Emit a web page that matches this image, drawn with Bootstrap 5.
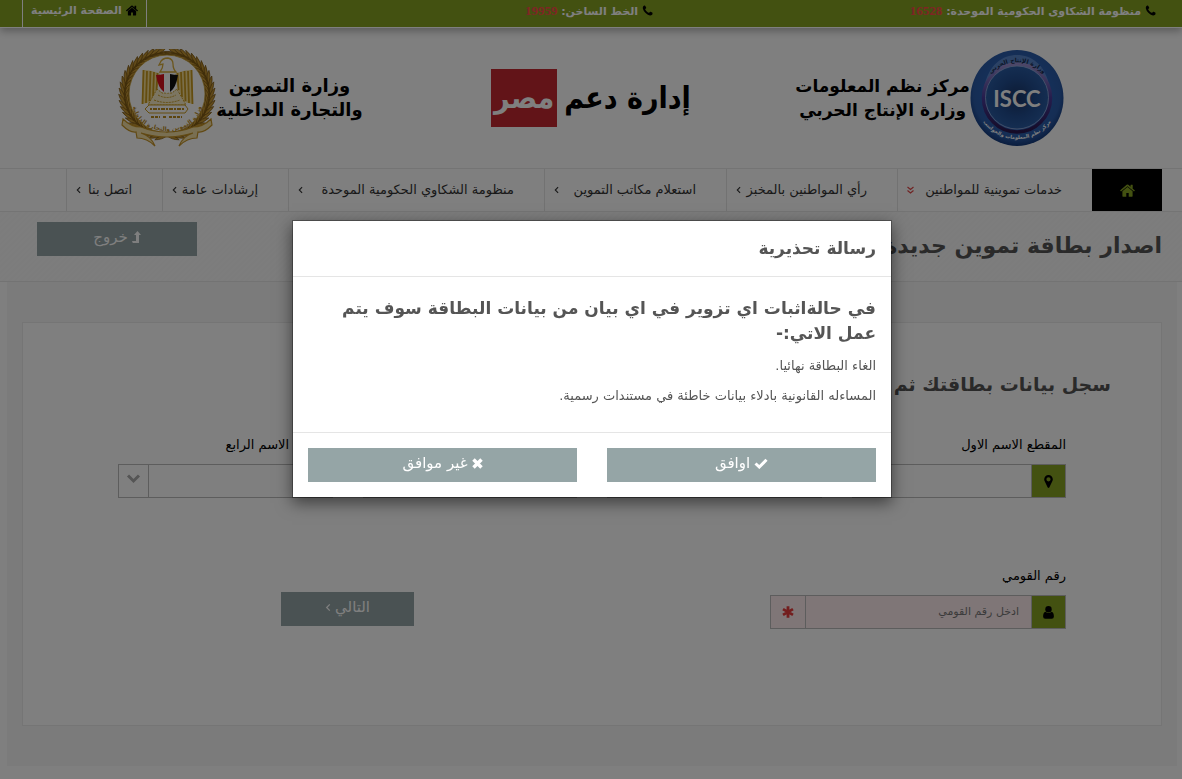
<!DOCTYPE html>
<html lang="ar" dir="rtl">
<head>
<meta charset="utf-8">
<meta name="viewport" content="width=device-width, initial-scale=1">
<title>اصدار بطاقة تموين جديدة</title>
<link href="https://cdn.jsdelivr.net/npm/bootstrap@5.3.0/dist/css/bootstrap.min.css" rel="stylesheet">
<style>
:root { --olive: #86a222; --asbestos: #95a5a6; --ink: #555; }
body { font-family: "DejaVu Sans", "Noto Sans", sans-serif; font-size: 13px; color: var(--ink); background: #fff; }
svg { display: block; flex: none; }
a { text-decoration: none; }

/* top strip */
.topstrip { display: grid; grid-template-columns: 1fr auto 1fr; height: 28px; padding: 0 26px 0 22px; background: var(--olive); border-bottom: 1px solid #fff; box-shadow: 0 3px 8px rgba(0,0,0,.3); color: #fff; font-size: 11px; font-weight: 700; line-height: 22px; position: relative; }
.topstrip .hot { display: flex; gap: 4px; }
.topstrip svg { margin-top: 5px; color: #000; }
.topstrip b { color: #ff4a4a; font-family: "Liberation Serif", serif; font-size: 13px; }
.home-link { justify-self: end; display: flex; gap: 4px; padding: 0 8px; color: #fff; border: solid #fff; border-width: 0 1px; }

/* logos */
.brands { display: grid; grid-template-columns: 1fr auto 1fr; align-items: center; height: 140px; padding: 0 10%; color: #000; }
.brands .org { font-size: 17px; font-weight: 700; line-height: 24px; text-align: center; margin: 0; }
.brands .org-supply { font-size: 18px; }
.wordmark { font-family: "DejaVu Sans Condensed", "DejaVu Sans", sans-serif; font-weight: 700; font-size: 30px; line-height: 58px; gap: 7px; }
.wordmark span:last-child { width: 66px; background: #c42830; color: #fff; text-align: center; }

/* main menu */
.mainmenu { display: grid; grid-template-columns: 70fr 195fr 171fr 182fr 256fr 126fr 96fr; padding: 0 20px 0 66px; border: solid #e8e8e8; border-width: 1px 0; }
.mainmenu a { display: flex; align-items: center; justify-content: space-between; height: 42px; padding: 0 30px 0 9px; color: #333; font-size: 13px; white-space: nowrap; border-left: 1px solid #e4e4e4; }
.mainmenu a.start { background: #000; color: var(--olive); justify-content: center; padding: 0; border: 0; }

.titlebar { height: 70px; padding: 10px 20px 0 37px; border-bottom: 1px solid #e6e6e6; background: repeating-linear-gradient(135deg, #fbfbfb 0 2px, #f8f8f8 2px 4px); }
.titlebar h1 { font-size: 22px; font-weight: 700; line-height: 48px; margin: 0; color: var(--ink); }
.btn-flat { --bs-btn-bg: var(--asbestos); --bs-btn-color: #fff; --bs-btn-hover-bg: #7f8c8d; --bs-btn-hover-color: #fff; --bs-btn-border-radius: 0; border: 0; height: 34px; padding: 0 0 4px; font-size: 15px; line-height: 30px; display: flex; align-items: center; justify-content: center; gap: 4px; width: 100%; }
.btn-exit { width: 160px; }

.stage { background: #f7f7f7; margin: 0 5px 14px 7px; padding: 40px 15px; }
.panel { background: #fff; border: 1px solid #ebebeb; padding: 46px 50px 96px; }
.panel h2 { font-size: 19px; font-weight: 700; line-height: 30px; margin: 0 0 34px; color: var(--ink); }
.fields { padding: 0 45px; }
.fields .row { --bs-gutter-x: 30px; }
.fields label { color: #000; font-size: 13px; line-height: 24px; margin: 0 0 7px; display: block; white-space: nowrap; }
.fields .input-group { flex-wrap: nowrap; height: 34px; }
.fields .input-group > * { border-radius: 0 !important; border-color: #bbb; }
.fields .input-group > *:not(:first-child) { margin-left: 0 !important; border-right: 0; }
.tag { width: 35px; justify-content: center; padding: 0; background: var(--olive); color: #000; }
.tag-must { background: #ffecee; color: #e63c3c; }
.fields .form-select { padding: 0 8px; font-size: 13px; background: #fff url("data:image/svg+xml,%3Csvg xmlns='http://www.w3.org/2000/svg' width='30' height='34'%3E%3Cpath d='M29.500 0v34' stroke='%23bbb'/%3E%3Cpath d='M9 11.500l5.500 5.500 5.500-5.500' fill='none' stroke='%23aaa' stroke-width='3'/%3E%3C/svg%3E") no-repeat left center; }
.fields .form-control { background: #ffecee; font-family: "DejaVu Sans", sans-serif; font-size: 11px; padding: 0 12px; }
.fields .form-control::placeholder { color: #777; }
.second-row { margin-top: 66px; }
.next-col { margin-inline-start: 33.3333%; padding-bottom: 3px; }

/* warning dialog */
.warn { padding-left: 2px; }
.warn .modal-dialog { max-width: 600px; margin: 220px auto 0; }
.warn .modal-content { border-radius: 0; border: 1px solid rgba(0,0,0,.3); box-shadow: 0 5px 15px rgba(0,0,0,.5); color: var(--ink); }
.warn .modal-header { padding: 12px 15px 13px; border-color: #e5e5e5; }
.warn .modal-title { font-size: 17px; font-weight: 700; line-height: 30px; }
.warn .modal-body { padding: 19px 15px 21px; }
.warn h3 { font-size: 17px; font-weight: 700; line-height: 25px; margin: 0 0 5px; }
.warn p { font-size: 13px; line-height: 30px; margin: 0; }
.warn .modal-footer { padding: 15px; border-color: #e5e5e5; flex-wrap: nowrap; gap: 30px; }
.warn .modal-footer > * { margin: 0; flex: 1 1 0; }
</style>
</head>
<body>
<svg width="0" height="0" class="position-absolute" aria-hidden="true">
  <symbol id="i-home" viewBox="0 0 16 14"><path fill="currentColor" d="M8 3.200 2.500 7.800V13q0 .6.6.6h3.600V9.600h2.600v4h3.600q.6 0 .6-.6V7.800zM15.800 6.800 13.600 5V1q0-.3-.3-.3h-1.700q-.3 0-.3.300v2L8.900.8q-.9-.7-1.800 0L.2 6.800q-.3.300 0 .5l.6.600q.3.300.5 0L8 2.300l6.700 5.600q.2.300.5 0l.6-.6q.3-.2 0-.5z"/></symbol>
  <symbol id="i-phone" viewBox="0 0 12 12"><path fill="currentColor" d="M11.500 9.300q0 .8-.5 1.300-1 1-2.300.9-2.200-.4-4.800-2.900T.9 3.800Q.6 2.200 1.600 1q.7-.7 1.500-.5.300 0 .5.500l.9 1.700q.3.500-.1.900l-.8.700q-.3.300-.1.600.6 1.200 1.700 2.100.9.900 2 1.500.3.200.6-.1l.8-.9q.3-.4.8-.1l1.700.9q.4.300.4 1z"/></symbol>
  <symbol id="i-left" viewBox="0 0 6 10"><path fill="none" stroke="currentColor" stroke-width="1.400" d="M5 1.500 1.500 5 5 8.500"/></symbol>
</svg>

<header>
  <div class="topstrip">
    <div class="hot"><svg width="11" height="11"><use href="#i-phone"/></svg><span>منظومة الشكاوى الحكومية الموحدة: <b>16528</b></span></div>
    <div class="hot"><svg width="11" height="11"><use href="#i-phone"/></svg><span>الخط الساخن: <b>19959</b></span></div>
    <a class="home-link" href="#"><svg width="12" height="11"><use href="#i-home"/></svg><span>الصفحة الرئيسية</span></a>
  </div>

  <div class="brands">
    <div class="d-flex align-items-center">
      <svg width="94" height="98" viewBox="0 0 94 98" role="img" aria-label="ISCC">
        <defs>
          <radialGradient id="rim" cx=".5" cy=".45" r=".55"><stop offset="0" stop-color="#2f6fd0"/><stop offset=".85" stop-color="#2a5ba8"/><stop offset="1" stop-color="#143a7c"/></radialGradient>
          <linearGradient id="ring" x1="0" y1="0" x2="0" y2="1"><stop offset="0" stop-color="#9a8fd0"/><stop offset=".5" stop-color="#4a3a9a"/><stop offset="1" stop-color="#2a1850"/></linearGradient>
          <radialGradient id="core" cx=".5" cy=".5" r=".5"><stop offset="0" stop-color="#1a3668"/><stop offset=".6" stop-color="#224e92"/><stop offset="1" stop-color="#2a5ca4"/></radialGradient>
          <path id="arcTop" d="M16 32A35 35 0 0 1 78 32"/>
          <path id="arcLow" d="M9 66A42 42 0 0 0 85 66"/>
        </defs>
        <ellipse cx="47" cy="49" rx="46.500" ry="48" fill="url(#rim)"/>
        <path d="M14 40C18 15 33 6 47 6s29 9 33 34C70 12 24 12 14 40z" fill="#8fb4ea" opacity=".45"/>
        <ellipse cx="47" cy="49" rx="33.500" ry="34" fill="none" stroke="url(#ring)" stroke-width="3.500"/>
        <circle cx="47" cy="48.500" r="31.500" fill="url(#core)" stroke="#a9b8e0" stroke-width=".7"/>
        <text x="47" y="58" text-anchor="middle" direction="ltr" font-family="Lato,sans-serif" font-weight="700" font-size="22" fill="#fff">ISCC</text>
        <text font-size="6" fill="#1a2c50" font-weight="700" text-anchor="middle"><textPath href="#arcTop" startOffset="50%">وزارة الإنتاج الحربي</textPath></text>
        <text font-size="5" fill="#fff" font-weight="700" text-anchor="middle"><textPath href="#arcLow" startOffset="50%">مركز نظم المعلومات والحواسب</textPath></text>
      </svg>
      <p class="org">مركز نظم المعلومات<br>وزارة الإنتاج الحربي</p>
    </div>
    <div class="wordmark d-flex"><span>إدارة دعم</span><span>مصر</span></div>
    <div class="d-flex align-items-center justify-content-end">
      <p class="org org-supply">وزارة التموين<br>والتجارة الداخلية</p>
      <svg width="98" height="98" viewBox="0 0 98 98" role="img" aria-label="وزارة التموين">
        <defs>
          <path id="arcEmb" d="M15 57A34 25 0 0 0 83 57"/>
          <marker id="leaf" viewBox="-6 -6 12 12" markerWidth="12" markerHeight="12" markerUnits="userSpaceOnUse" orient="auto" overflow="visible"><path d="M-6 0Q-2-5 6-6 3-1-6 0zM-6 0Q0 5 6 4 2-1-6 0zM-4 0Q2-2 8 0 2 2-4 0z" fill="#c39432" stroke="#7c5814" stroke-width=".7"/></marker>
          <path id="branch" d="M49 86 43.500 85.600 38.100 84.600 33 83 28 80.500 23.400 77.500 19.300 74 15.700 70 12.600 65.500 10.200 60.700 8.400 55.600 7.400 50.400 7 45 7.400 39.600 8.400 34.400 10.200 29.300 12.600 24.500 15.700 20 19.300 16 23.400 12.500 28 9.500 33 7 38.100 5.400 43.500 4.400 49 4" fill="none" stroke="#8a6420" stroke-width="4" marker-mid="url(#leaf)"/>
        </defs>
        <use href="#branch"/><use href="#branch" transform="matrix(-1 0 0 1 98 0)"/>
        <ellipse cx="49" cy="45" rx="38" ry="39" fill="#fff" stroke="#c49a30" stroke-width=".8"/>
        <path d="M42 14q2-5 8-5 5 1 5 6 0 5 3 8H42q3-4 3-8l-4 1z" fill="#fff" stroke="#d8ac3a" stroke-width="1.300"/>
        <path d="M25 21q9 0 17 4l-2 12q-3 8-7 16l-9 2z" fill="#f6df95"/>
        <path d="M74 21q-9 0-17 4l2 12q3 8 7 16l9 2z" fill="#f6df95"/>
        <path d="M25.500 21l-1 34M29 22l-1 32M32.500 22l-1 30M36 23l-1 25M39.500 24l-1 17M73.500 21l1 34M70 22l1 32M66.500 22l1 30M63 23l1 25M59.500 24l1 17" stroke="#c99a1e" stroke-width="1.800" fill="none"/>
        <path d="M39 40l-9 16h38l-9-16-5 4H44z" fill="#f8ecc4" stroke="#c99a1e" stroke-width="1" stroke-dasharray="2 1"/>
        <path d="M40 46q9 5 18 0M36 51q13 5 26 0" fill="none" stroke="#c99a1e" stroke-dasharray="2 1"/>
        <path d="M38 26q4 0 8-1v18q-6-4-8-17z" fill="#d8101c"/><path d="M46 25h6v18l-3 1-3-1z" fill="#fff"/><path d="M52 25q4 1 8 1-2 13-8 17z" fill="#111"/>
        <path d="M31 56h36l3 4-3 4H31l-4-4z" fill="#fff" stroke="#c99a1e" stroke-width="1"/>
        <path d="M32 60h34" stroke="#b98a1e" stroke-width="2" stroke-dasharray="2 1 4 1"/>
        <path d="M33 68h9m3 0h3m3 0h13" stroke="#b98a1e" stroke-width="2" stroke-dasharray="3 1"/>
        <path d="M5 70l-1 6q8 8 14 7l1 6q10 0 18 8-4-10-14-13 14 4 26 4t26-4q-10 3-14 13 8-8 18-8l1-6q6 1 14-7l-1-6q-8 8-18 8-12 5-26 5T23 78Q13 78 5 70z" fill="#f3dfa4" stroke="#c49327" stroke-width="1.200"/>
        <text font-size="6" fill="#b98a1e" font-weight="700" text-anchor="middle"><textPath href="#arcEmb" startOffset="50%">وزارة التموين والتجارة الداخلية</textPath></text>
      </svg>
    </div>
  </div>

  <nav class="mainmenu" aria-label="القائمة">
    <a class="start" href="#" aria-label="الرئيسية"><svg width="15" height="13"><use href="#i-home"/></svg></a>
    <a href="#"><span>خدمات تموينية للمواطنين</span><svg width="7" height="8" viewBox="0 0 7 8"><path d="M.5 1l3 2.500L6.500 1M.5 4.500l3 2.500 3-2.500" fill="none" stroke="#e04848" stroke-width="1.200"/></svg></a>
    <a href="#"><span>رأي المواطنين بالمخبز</span><svg width="5" height="8"><use href="#i-left"/></svg></a>
    <a href="#"><span>استعلام مكاتب التموين</span><svg width="5" height="8"><use href="#i-left"/></svg></a>
    <a href="#"><span>منظومة الشكاوي الحكومية الموحدة</span><svg width="5" height="8"><use href="#i-left"/></svg></a>
    <a href="#"><span>إرشادات عامة</span><svg width="5" height="8"><use href="#i-left"/></svg></a>
    <a href="#"><span>اتصل بنا</span><svg width="5" height="8"><use href="#i-left"/></svg></a>
  </nav>
</header>

<main>
  <div class="titlebar d-flex justify-content-between align-items-start">
    <h1>اصدار بطاقة تموين جديدة</h1>
    <button type="button" class="btn btn-flat btn-exit"><svg width="9" height="12" viewBox="0 0 9 12"><path fill="currentColor" d="M5.500 0 9 4H7v8H.8L0 10h4V4H2z"/></svg>خروج</button>
  </div>

  <div class="stage">
    <section class="panel">
      <h2>سجل بيانات بطاقتك ثم</h2>
      <form class="fields">
        <div class="row">
          <div class="col-3"><label for="n1">المقطع الاسم الاول</label>
            <div class="input-group"><span class="input-group-text tag"><svg width="9" height="13" viewBox="0 0 9 13"><path fill="currentColor" fill-rule="evenodd" d="M4.500 0A4.300 4.300 0 0 1 8.800 4.300Q8.800 5.300 8.400 6L5.300 12.500q-.8.900-1.600 0L.6 6Q.2 5.300.2 4.300A4.300 4.300 0 0 1 4.500 0zm0 2.200a2.100 2.100 0 1 0 0 4.200 2.100 2.100 0 0 0 0-4.200z"/></svg></span><select id="n1" class="form-select"><option></option></select></div></div>
          <div class="col-3"><label for="n2">المقطع الاسم الثاني</label>
            <div class="input-group"><select id="n2" class="form-select"><option></option></select></div></div>
          <div class="col-3"><label for="n3">المقطع الاسم الثالث</label>
            <div class="input-group"><select id="n3" class="form-select"><option></option></select></div></div>
          <div class="col-3"><label for="n4">المقطع الاسم الرابع</label>
            <div class="input-group"><select id="n4" class="form-select"><option></option></select></div></div>
        </div>
        <div class="row second-row align-items-end">
          <div class="col-4"><label for="nid">رقم القومي</label>
            <div class="input-group"><span class="input-group-text tag"><svg width="11" height="13" viewBox="0 0 11 13"><circle cx="5.500" cy="3.300" r="3.200" fill="currentColor"/><path fill="currentColor" d="M2.500 5.700q3 2.600 6 0 2.400.8 2.400 4.800 0 2.200-2.200 2.200H2.300Q.1 12.700.1 10.500q0-4 2.400-4.800z"/></svg></span><input id="nid" type="text" class="form-control" placeholder="ادخل رقم القومي"><span class="input-group-text tag tag-must"><svg width="12" height="12" viewBox="0 0 12 12"><path d="M6 .2v11.600M1 3.100l10 5.800M11 3.100 1 8.900" stroke="currentColor" stroke-width="2.800"/></svg></span></div></div>
          <div class="col-2 next-col"><button type="button" class="btn btn-flat">التالي<svg width="6" height="9"><use href="#i-left"/></svg></button></div>
        </div>
      </form>
    </section>
  </div>
</main>

<div class="modal-backdrop show"></div>
<div class="modal warn show d-block" role="dialog" aria-modal="true" aria-labelledby="warnTitle" tabindex="-1">
  <div class="modal-dialog">
    <div class="modal-content">
      <div class="modal-header"><h2 class="modal-title" id="warnTitle">رسالة تحذيرية</h2></div>
      <div class="modal-body">
        <h3>في حالةاثبات اي تزوير في اي بيان من بيانات البطاقة سوف يتم عمل الاتي:-</h3>
        <p>الغاء البطاقة نهائيا.</p>
        <p>المساءله القانونية بادلاء بيانات خاطئة في مستندات رسمية.</p>
      </div>
      <div class="modal-footer">
        <button type="button" class="btn btn-flat"><svg width="14" height="11" viewBox="0 0 14 11"><path d="M1.500 5.500 5.300 9l7.200-7.200" fill="none" stroke="currentColor" stroke-width="3"/></svg>اوافق</button>
        <button type="button" class="btn btn-flat"><svg width="11" height="11" viewBox="0 0 11 11"><path d="M1.500 1.500l8 8M9.500 1.500l-8 8" stroke="currentColor" stroke-width="3.500"/></svg>غير موافق</button>
      </div>
    </div>
  </div>
</div>
<script src="https://cdn.jsdelivr.net/npm/bootstrap@5.3.0/dist/js/bootstrap.bundle.min.js"></script>
</body>
</html>
